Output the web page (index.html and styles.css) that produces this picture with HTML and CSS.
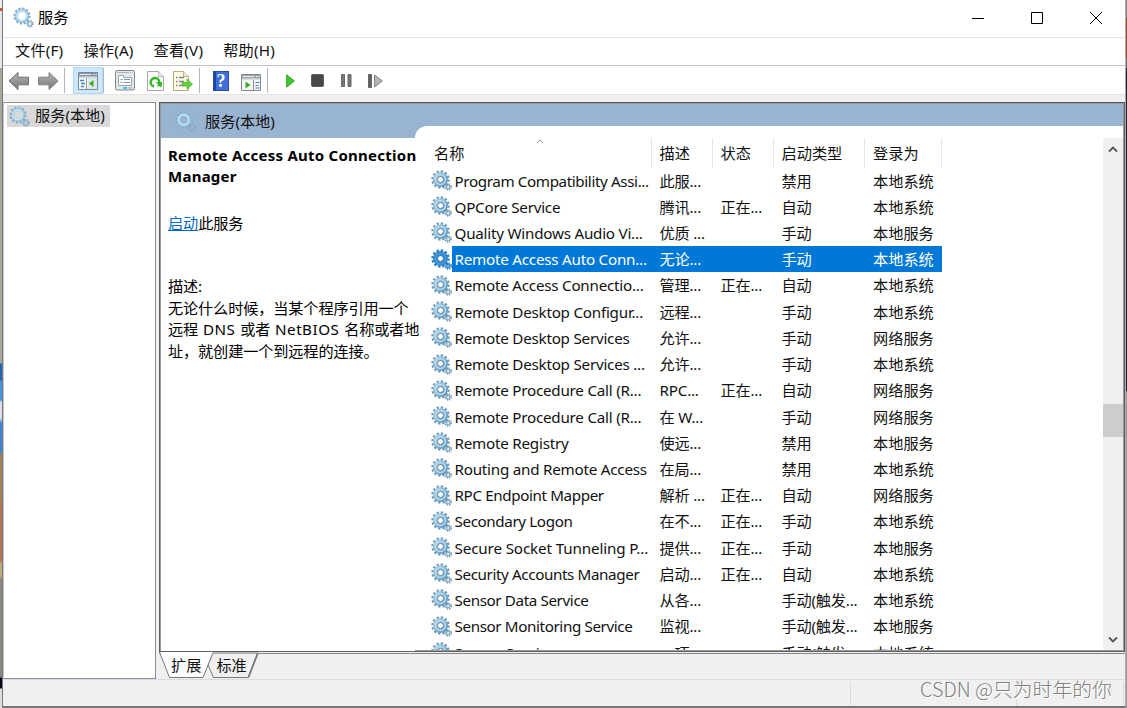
FILE: index.html
```
<!DOCTYPE html>
<html lang="zh-CN">

<head>
    <meta charset="UTF-8">
    <meta name="viewport" content="width=device-width, initial-scale=1.0">
    <title>服务</title>
    <link rel="stylesheet" href="styles.css">
</head>

<body>
    <svg class="defs" width="0" height="0">
        <defs>
            <linearGradient id="gearFill" x1="0" y1="0" x2="1" y2="1">
                <stop offset="0" stop-color="#a9d0e6" />
                <stop offset="1" stop-color="#5e97c0" />
            </linearGradient>
            <linearGradient id="arrowFill" x1="0" y1="0" x2="0" y2="1">
                <stop offset="0" stop-color="#b5b5b5" />
                <stop offset="1" stop-color="#777" />
            </linearGradient>
            <symbol id="gear" viewBox="0 0 21 21">
                <circle cx="9.5" cy="9.5" r="8" fill="none" stroke="#6c98b5" stroke-width="2.4" stroke-dasharray="2.3 1.89" />
                <circle cx="9.5" cy="9.5" r="5.3" fill="none" stroke="url(#gearFill)" stroke-width="4.4" />
                <circle cx="9.5" cy="9.5" r="5" fill="none" stroke="#b9dcef" stroke-width="1.4" />
                <circle cx="9.5" cy="9.5" r="3" fill="#fff" stroke="#587f9b" stroke-width="1" />
                <circle cx="17.2" cy="17" r="2.9" fill="none" stroke="#7699b0" stroke-width="1.8" stroke-dasharray="1.3 .98" />
                <circle cx="17.2" cy="17" r="1.7" fill="#eef7fc" stroke="#86b0ca" stroke-width="1.2" />
            </symbol>
            <symbol id="gearLight" viewBox="0 0 21 21">
                <circle cx="9" cy="9" r="7.6" fill="none" stroke="#86a9c3" stroke-width="2" stroke-dasharray="2.2 1.78" />
                <circle cx="9" cy="9" r="5.6" fill="none" stroke="#93c2de" stroke-width="3.2" />
                <circle cx="8.7" cy="8.7" r="5" fill="none" stroke="#c9e7f5" stroke-width="1.4" />
                <circle cx="17" cy="16.8" r="2.9" fill="none" stroke="#7d9eb5" stroke-width="1.7" stroke-dasharray="1.3 .98" />
                <circle cx="17" cy="16.8" r="1.8" fill="none" stroke="#93bad2" stroke-width="1.2" />
            </symbol>
            <symbol id="gearSelected" viewBox="0 0 21 21">
                <circle cx="9.5" cy="9.5" r="8" fill="none" stroke="#2a78b8" stroke-width="2.4" stroke-dasharray="2.3 1.89" />
                <circle cx="9.5" cy="9.5" r="5.3" fill="none" stroke="#3289cf" stroke-width="4.4" />
                <circle cx="9.5" cy="9.5" r="5.2" fill="none" stroke="#4a9bd8" stroke-width="1.4" />
                <circle cx="9.5" cy="9.5" r="3" fill="#fff" stroke="#20649c" stroke-width="1" />
                <circle cx="17.2" cy="17" r="2.9" fill="none" stroke="#2a78b8" stroke-width="1.8" stroke-dasharray="1.3 .98" />
                <circle cx="17.2" cy="17" r="1.7" fill="#78baf0" stroke="#3289cf" stroke-width="1.2" />
            </symbol>
        </defs>
    </svg>

    <div class="desktop-left"></div>
    <div class="window">
        <div class="titlebar">
            <svg class="app-icon"><use href="#gearLight" /></svg>
            <span class="title">服务</span>
            <svg class="win-btn" viewBox="0 0 14 14"><path d="M1 7.5h12" /></svg>
            <svg class="win-btn" viewBox="0 0 14 14"><path d="M1.5 1.5h11v11h-11z" /></svg>
            <svg class="win-btn" viewBox="0 0 14 14"><path d="M1 1l12 12M13 1L1 13" /></svg>
        </div>

        <div class="menubar">
            <span>文件(F)</span>
            <span>操作(A)</span>
            <span>查看(V)</span>
            <span>帮助(H)</span>
        </div>

        <div class="toolbar">
            <svg class="tool arrow" viewBox="0 0 22 20"><path d="M1 10L10 1.5v4.7h10.5v7.6H10v4.7z" fill="url(#arrowFill)" stroke="#707070" /></svg>
            <svg class="tool arrow next" viewBox="0 0 22 20"><path d="M21 10L12 1.5v4.7H1.5v7.6H12v4.7z" fill="url(#arrowFill)" stroke="#808080" /></svg>
            <i class="sep"></i>
            <span class="tool-active">
                <svg width="20" height="18" viewBox="0 0 20 18">
                    <path d="M.5.5h19v17H.5z" fill="#f4f7f9" stroke="#7d8994" />
                    <path d="M1 1h18v4.5H1z" fill="#8593a0" /><path d="M1.5 2.5h12M15 2.5h1.5M17.5 2.5H19M1 5h18" stroke="#e4edf4" />
                    <path d="M8.5 6v11" stroke="#8996a1" /><path d="M2 8.5h4M3 11.5h4M3 14.5h3" stroke="#4c84bb" stroke-width="1.4" />
                    <path d="M10 6h9v11h-9z" fill="#dfe5e8" /><path d="M15.5 8v7l-4.5-3.5z" fill="#37ad21" />
                </svg>
            </span>
            <i class="sep"></i>
            <svg class="tool props" width="20" height="21" viewBox="0 0 20 21">
                <rect x=".5" y=".5" width="19" height="19.5" rx="1.5" fill="#e4e8eb" stroke="#85898d" />
                <path d="M2 2.5h12M15 2.5h1M17 2.5h1" stroke="#aab3ba" />
                <path d="M3.5 5.5h5v2h8v8h-13z" fill="#fff" stroke="#9ca6ae" />
                <path d="M5.5 9.5h2M9 9.5h6M5.5 12.5h2M9 12.5h6" stroke="#7b94ab" />
                <path d="M8 18h4" stroke="#43c3ee" stroke-width="2" /><path d="M13.5 18h4" stroke="#b7c3ca" stroke-width="2" />
            </svg>
            <svg class="tool refresh" width="17" height="20" viewBox="0 0 17 20">
                <path d="M.5.5h11l5 5v14H.5z" fill="#fafafa" stroke="#a7a7a7" /><path d="M11.5.5v5h5" fill="#eee" stroke="#bbb" />
                <path d="M7 15.5A4.3 4.3 0 1 1 12.3 11.5" fill="none" stroke="#36b928" stroke-width="2.4" />
                <path d="M8.5 11h6.5v2.5l-1 3-2-1.5-2 .5 1-2.5z" fill="#36b928" />
            </svg>
            <svg class="tool export" width="20" height="20" viewBox="0 0 20 20">
                <path d="M.5.5h10l5 5v14H.5z" fill="#fffbe1" stroke="#b4ab88" /><path d="M10.5.5v5h5" fill="#f4ecc5" stroke="#c0b68e" />
                <path d="M3 6.5h1.5M6 6.5h5M3 10.5h1.5M6 10.5h5M3 14.5h1.5M6 14.5h5" stroke="#7b849c" stroke-width="1.3" />
                <path d="M9 11.5h5V8l5.5 5.2-5.500 5V15H9z" fill="#63cf3f" stroke="#4fb52e" stroke-width=".7" />
            </svg>
            <i class="sep"></i>
            <span class="help-icon">?</span>
            <svg class="tool pane" width="20" height="17" viewBox="0 0 20 17">
                <path d="M.5.5h19v16H.5z" fill="#f4f5f6" stroke="#85898d" />
                <path d="M1 1h18v4.5H1z" fill="#9da2a7" /><path d="M1.5 2.5h12M15 2.5h1.5M17.5 2.5H19M1 5h18" stroke="#e9eef1" />
                <path d="M12.5 6v10" stroke="#8b9399" /><path d="M14.5 8.5h4M14.5 11.5h3M14.5 14h4" stroke="#4c84bb" stroke-width="1.2" />
                <path d="M4.5 7.5v7l5-3.5z" fill="#37ad21" />
            </svg>
            <i class="sep"></i>
            <svg class="tool play" width="9" height="14" viewBox="0 0 9 14"><path d="M.7.9v12.2L8.5 7z" fill="#3fc72f" stroke="#2ca51f" /></svg>
            <svg class="tool stop" width="13" height="13" viewBox="0 0 13 13"><rect x=".5" y=".5" width="12" height="12" rx="1" fill="#484848" stroke="#5d5d5d" /></svg>
            <svg class="tool pause" width="11" height="13" viewBox="0 0 11 13"><path d="M.5.5h3v12h-3zM7 .5h3v12H7z" fill="#777" stroke="#686868" /></svg>
            <svg class="tool restart" width="15" height="14" viewBox="0 0 15 14"><path d="M.5.5h3v13h-3z" fill="#606060" stroke="#666" /><path d="M6.5 1v12l8-6z" fill="#b4b4b4" stroke="#858585" /></svg>
        </div>

        <div class="content">
            <div class="tree">
                <div class="tree-item">
                    <svg><use href="#gearLight" /></svg>
                    <span>服务(本地)</span>
                </div>
            </div>

            <div class="right">
                <div class="pane-box">
                    <div class="pane-header">
                        <svg><use href="#gearLight" /></svg>
                        <span>服务(本地)</span>
                    </div>
                    <div class="pane-body">
                        <div class="detail">
                            <h2>Remote Access Auto Connection Manager</h2>
                            <p class="action"><a>启动</a>此服务</p>
                            <p class="desc">描述:<br>无论什么时候，当某个程序引用一个<br>远程 <i>DNS</i> 或者 <i>NetBIOS</i> 名称或者地<br>址，就创建一个到远程的连接。</p>
                        </div>

                        <div class="list">
                            <div class="head">
                                <span>名称<svg class="sort" viewBox="0 0 8 5"><path d="M1 4l3-3 3 3" /></svg></span>
                                <span>描述</span><span>状态</span><span>启动类型</span><span>登录为</span>
                            </div>
                            <div class="rows">
                                <div class="row"><svg><use href="#gear" /></svg><b class="tight">Program Compatibility Assi...</b><span>此服...</span><span></span><span>禁用</span><span>本地系统</span></div>
                                <div class="row"><svg><use href="#gear" /></svg><b>QPCore Service</b><span>腾讯...</span><span>正在...</span><span>自动</span><span>本地系统</span></div>
                                <div class="row"><svg><use href="#gear" /></svg><b>Quality Windows Audio Vi...</b><span>优质 ...</span><span></span><span>手动</span><span>本地服务</span></div>
                                <div class="row selected"><svg><use href="#gearSelected" /></svg><b>Remote Access Auto Conn...</b><span>无论...</span><span></span><span>手动</span><span>本地系统</span></div>
                                <div class="row"><svg><use href="#gear" /></svg><b>Remote Access Connectio...</b><span>管理...</span><span>正在...</span><span>自动</span><span>本地系统</span></div>
                                <div class="row"><svg><use href="#gear" /></svg><b>Remote Desktop Configur...</b><span>远程...</span><span></span><span>手动</span><span>本地系统</span></div>
                                <div class="row"><svg><use href="#gear" /></svg><b>Remote Desktop Services</b><span>允许...</span><span></span><span>手动</span><span>网络服务</span></div>
                                <div class="row"><svg><use href="#gear" /></svg><b>Remote Desktop Services ...</b><span>允许...</span><span></span><span>手动</span><span>本地系统</span></div>
                                <div class="row"><svg><use href="#gear" /></svg><b>Remote Procedure Call (R...</b><span>RPC...</span><span>正在...</span><span>自动</span><span>网络服务</span></div>
                                <div class="row"><svg><use href="#gear" /></svg><b>Remote Procedure Call (R...</b><span>在 W...</span><span></span><span>手动</span><span>网络服务</span></div>
                                <div class="row"><svg><use href="#gear" /></svg><b>Remote Registry</b><span>使远...</span><span></span><span>禁用</span><span>本地服务</span></div>
                                <div class="row"><svg><use href="#gear" /></svg><b>Routing and Remote Access</b><span>在局...</span><span></span><span>禁用</span><span>本地系统</span></div>
                                <div class="row"><svg><use href="#gear" /></svg><b class="tight">RPC Endpoint Mapper</b><span>解析 ...</span><span>正在...</span><span>自动</span><span>网络服务</span></div>
                                <div class="row"><svg><use href="#gear" /></svg><b class="tight">Secondary Logon</b><span>在不...</span><span>正在...</span><span>手动</span><span>本地系统</span></div>
                                <div class="row"><svg><use href="#gear" /></svg><b class="wide">Secure Socket Tunneling P...</b><span>提供...</span><span>正在...</span><span>手动</span><span>本地服务</span></div>
                                <div class="row"><svg><use href="#gear" /></svg><b class="tight">Security Accounts Manager</b><span>启动...</span><span>正在...</span><span>自动</span><span>本地系统</span></div>
                                <div class="row"><svg><use href="#gear" /></svg><b class="tight">Sensor Data Service</b><span>从各...</span><span></span><span>手动(触发...</span><span>本地系统</span></div>
                                <div class="row"><svg><use href="#gear" /></svg><b class="tight">Sensor Monitoring Service</b><span>监视...</span><span></span><span>手动(触发...</span><span>本地服务</span></div>
                                <div class="row"><svg><use href="#gear" /></svg><b>Sensor Service</b><span>一项...</span><span></span><span>手动(触发...</span><span>本地系统</span></div>
                            </div>
                        </div>

                        <div class="scrollbar">
                            <svg viewBox="0 0 10 7"><path d="M1 5.5l4-4 4 4" /></svg>
                            <div class="thumb"></div>
                            <svg viewBox="0 0 10 7"><path d="M1 1.5l4 4 4-4" /></svg>
                        </div>
                    </div>
                </div>

                <div class="tabs">
                    <svg class="tab-shape" viewBox="0 0 100 27">
                        <path d="M49 13L54.5 25.5H89L98.5 1H53z" fill="#f0f0f0" stroke="#777" />
                        <path d="M89.5 25.5L99 1" stroke="#777" stroke-width="1.5" />
                        <path d="M.5 0L10.5 25.5H44L54 0z" fill="#fff" />
                        <path d="M.5 0L10.5 25.5H44L54 1" fill="none" stroke="#777" />
                    </svg>
                    <span class="tab">扩展</span>
                    <span class="tab">标准</span>
                </div>
            </div>
        </div>

        <div class="statusbar">
            <span></span><span></span><span></span>
        </div>
    </div>
    <div class="desktop-right"></div>
    <div class="watermark">CSDN @只为时年的你</div>
</body>

</html>
```
FILE: styles.css
```
* {
    box-sizing: border-box;
}

body {
    margin: 0;
    width: 1127px;
    height: 708px;
    overflow: hidden;
    display: flex;
    position: relative;
    font-family: "Noto Sans", "Noto Sans CJK SC", sans-serif;
    font-size: 15.2px;
    color: #111;
    background: #f0f0f0;
}

svg {
    display: block;
    flex: none;
}

.defs {
    position: absolute;
}

.desktop-left {
    width: 3px;
    flex: none;
    border-right: 1px solid #777;
    background: linear-gradient(#eee 8px, #d84f32 8px 11px, #e7e7e7 11px 68px, #aaa89e 68px 363px, #2365b7 364px 380px, #3c98e4 381px 400px, #dce2e8 402px 418px, #3985dc 423px 452px, #a28450 454px 500px, #b07650 504px 560px, #c2aa80 564px 576px, #8b8881 580px 677px, #080812 678px 688px, #ddd 689px);
}

.desktop-right {
    width: 1px;
    background: linear-gradient(#888 18px, #a44a32 18px 58px, #777 58px 68px, #172333 68px 390px, #999 392px);
}

.window {
    flex: 1;
    display: flex;
    flex-direction: column;
    background: #f0f0f0;
    border-bottom: 2px solid #777;
    border-right: 1px solid #aaa;
}

/* title */
.titlebar {
    height: 38px;
    display: flex;
    align-items: center;
    padding: 0 22px 2px 10px;
    background: #fff;
    border-bottom: 1px solid #e4e4e4;
}

.app-icon {
    width: 21px;
    height: 21px;
}

.title {
    margin: -3px auto 0 4px;
    color: #000;
}

.win-btn {
    width: 14px;
    height: 14px;
    margin-left: 45px;
    fill: none;
    stroke: #000;
}

.menubar {
    height: 28px;
    display: flex;
    gap: 20px;
    align-items: center;
    padding: 0 0 5px 12px;
    background: #fff;
    border-bottom: 1px solid #c3c3c9;
}

.menubar span {
    letter-spacing: .2px;
}

/* toolbar */
.toolbar {
    height: 29px;
    display: flex;
    align-items: center;
    padding: 1px 0 0 5px;
    background: #fff;
    border-bottom: 1px solid #e4e4e4;
}

.arrow {
    width: 22px;
    height: 20px;
}

.next {
    margin-left: 7px;
}

.sep {
    width: 1px;
    height: 25px;
    margin-left: 5px;
    background: #b6b6b6;
}

.tool-active {
    width: 30px;
    height: 27px;
    margin-left: 8px;
    display: flex;
    align-items: center;
    justify-content: center;
    background: #cce8ff;
    border: 1px solid #b0d8f8;
}

.tool-active + .sep {
    margin-left: 0;
}

.props {
    margin-left: 11px;
}

.refresh {
    margin-left: 12px;
}

.export {
    margin-left: 9px;
}

.export + .sep {
    margin-left: 6px;
}

.help-icon {
    width: 16px;
    height: 20px;
    margin-left: 13px;
    background: linear-gradient(90deg, #1945a2 2px, #3f6fdd 2px);
    border: 1px solid #2a4ca8;
    color: #fff;
    font: bold 18px/18px "Liberation Serif", serif;
    text-align: center;
}

.pane {
    margin-left: 12px;
    margin-top: 3px;
}

.pane + .sep {
    margin-left: 6px;
}

.play {
    margin-left: 18px;
}

.stop {
    margin-left: 16px;
}

.pause {
    margin-left: 17px;
}

.restart {
    margin-left: 16px;
}

/* panels */
.content {
    height: 584px;
    display: flex;
    gap: 6px;
    padding-top: 7px;
}

.tree {
    width: 153px;
    padding: 2px 3px;
    background: #fff;
    border: 1px solid #878e9b;
    border-left-color: #c5c8ce;
}

.tree-item {
    width: 103px;
    height: 22px;
    display: flex;
    align-items: center;
    gap: 5px;
    padding-left: 2px;
    background: #d9d9d9;
}

.tree-item svg,
.pane-header svg {
    width: 21px;
    height: 21px;
}

.tree-item span,
.pane-header span {
    white-space: nowrap;
}

.tree-item span {
    margin-top: -4px;
}

.right {
    flex: 1;
    min-width: 0;
    display: flex;
    flex-direction: column;
    margin-left: -3px;
}

.pane-box {
    height: 550px;
    display: flex;
    flex-direction: column;
    background: #99b4d1;
    border: 1px solid #606060;
    border-top: 2px solid #555;
    outline: 1px solid #999;
    outline-offset: -2px;
    padding: 1px 1px 0;
}

.pane-header {
    height: 21px;
    flex: none;
    display: flex;
    align-items: flex-start;
    gap: 9px;
    padding-left: 14px;
}

.pane-header svg {
    margin-top: 6px;
}

.pane-header span {
    margin-top: 4px;
    line-height: 24px;
}

.pane-body {
    flex: 1;
    min-height: 0;
    display: flex;
}

.detail {
    position: relative;
    z-index: 1;
    width: 254px;
    margin-top: 12px;
    padding: 6.5px 0 0 7px;
    background: #fff;
    color: #000;
    line-height: 21.5px;
}

.detail h2 {
    margin: 0 -8px 0 0;
    font-size: 15px;
    line-height: 21.5px;
    letter-spacing: .25px;
}

.detail p {
    margin: 0;
    white-space: nowrap;
}

.detail .action {
    margin-top: 25px;
    letter-spacing: -.1px;
}

.detail .desc {
    margin-top: 42px;
    letter-spacing: -.15px;
}

.desc i {
    font-style: normal;
    letter-spacing: .5px;
    margin: 0 1px;
}

.action a {
    color: #0066cc;
    text-decoration: underline;
}

.list {
    flex: 1;
    overflow: hidden;
    background: #fff;
    border-top-left-radius: 12px;
    padding: 12px 0 0 16px;
}

.head {
    height: 29.6px;
    display: grid;
    grid-template-columns: 221px 61px 61px 91px 77px;
    line-height: 30px;
}

.head span {
    position: relative;
    padding-left: 7.5px;
    border-right: 1px solid #e5e5e5;
}

.head span:first-child {
    padding-left: 3px;
}

.head span:last-child {
    padding-left: 8px;
}

.sort {
    position: absolute;
    left: 105px;
    top: 1px;
    width: 8px;
    height: 5px;
    fill: none;
    stroke: #999;
}

.row {
    width: 511px;
    height: 26.23px;
    display: grid;
    grid-template-columns: 21px 200px 61px 61px 91px 77px;
    line-height: 26px;
    white-space: nowrap;
}

.row svg {
    width: 21px;
    height: 21px;
    margin-top: 2.4px;
}

.row b {
    font-weight: normal;
    letter-spacing: -.23px;
    padding-left: 2.5px;
}

.row .tight {
    letter-spacing: -.38px;
}

.row .wide {
    letter-spacing: -.13px;
}

.row span {
    padding-left: 7.5px;
    letter-spacing: -.2px;
}

.row span:last-child {
    padding-left: 8px;
    letter-spacing: 0;
}

.selected {
    background: linear-gradient(90deg, #fff 21px, #0078d7 21px);
    color: #fff;
}

.scrollbar {
    width: 20px;
    margin-top: 12px;
    display: flex;
    flex-direction: column;
    align-items: center;
    background: #f0f0f0;
    padding: 8px 0;
    box-shadow: 0 -12px #fff;
}

.scrollbar svg {
    width: 10px;
    height: 7px;
    fill: none;
    stroke: #555;
    stroke-width: 1.8;
}

.thumb {
    width: 20px;
    height: 33px;
    margin: 251px 0 auto;
    background: #cdcdcd;
}

.tabs {
    height: 27px;
    display: flex;
    gap: 15px;
    padding-left: 12px;
    border-top: 1px solid #888;
    margin-top: 1px;
    position: relative;
    line-height: 23px;
}

.tab-shape {
    position: absolute;
    left: 0;
    top: -2px;
    width: 100px;
    height: 27px;
}

.tab {
    position: relative;
}

.statusbar {
    flex: 1;
    display: grid;
    grid-template-columns: 848px 166px 107px;
    border-top: 1px solid #dcdcdc;
}

.statusbar span {
    border-right: 1px solid #dcdcdc;
    margin-top: 2px;
}

.watermark {
    position: absolute;
    left: 920px;
    top: 675px;
    color: #808080;
    font: 300 19.8px/28px "Noto Sans CJK SC", sans-serif;
    text-shadow: 1px 1px #fff;
    white-space: nowrap;
}
```
